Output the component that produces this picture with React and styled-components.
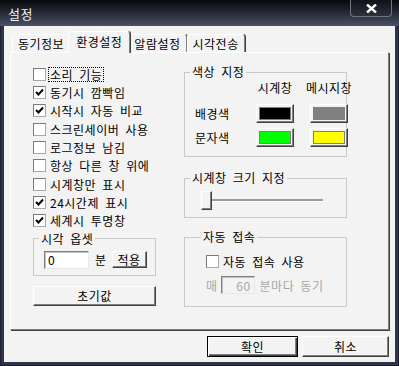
import React from "react";
import styled, { createGlobalStyle } from "styled-components";

const FONT = `"Noto Sans CJK KR", "Noto Sans", sans-serif`;

const GlobalStyle = createGlobalStyle`
  html, body { margin: 0; padding: 0; background: #2f3545; }
  body {
    font-family: ${FONT};
    font-size: 12px;
    color: #000;
    letter-spacing: 0.5px;
    word-spacing: 3px;
  }
  * { box-sizing: border-box; }
`;

const options = [
  { label: "소리 기능", checked: false, focus: true },
  { label: "동기시 깜빡임", checked: true },
  { label: "시작시 자동 비교", checked: true },
  { label: "스크린세이버 사용", checked: false },
  { label: "로그정보 남김", checked: false },
  { label: "항상 다른 창 위에", checked: false },
  { label: "시계창만 표시", checked: false },
  { label: "24시간제 표시", checked: true },
  { label: "세계시 투명창", checked: true },
];

const tabs = ["동기정보", "환경설정", "알람설정", "시각전송"];

function CheckBox({ checked }) {
    return (
        <Box>
            {checked && (
                <svg width="9" height="9" viewBox="0 0 9 9">
                    <path d="M1 4 L3.5 6.5 L8 1.5" fill="none" stroke="#000" strokeWidth="2" />
                </svg>
            )}
        </Box>
    );
}

function App() {
    return (
        <>
            <GlobalStyle />
            <Window>
                <TitleBar>
                    <Title>설정</Title>
                    <CloseBtn>
                        <svg width="11" height="9" viewBox="0 0 11 9">
                            <path d="M1 0.5 L10 8.5 M10 0.5 L1 8.5" stroke="#fff" strokeWidth="2.4" />
                        </svg>
                    </CloseBtn>
                </TitleBar>
                <Client>
                    <TabRow>
                        {tabs.map((t, i) => (
                            <Tab key={t} $active={i === 1}>{t}</Tab>
                        ))}
                    </TabRow>
                    <Panel>
                        <LeftCol>
                            <CheckList>
                                {options.map((o) => (
                                    <CheckRow key={o.label}>
                                        <CheckBox checked={o.checked} />
                                        <CheckLabel $focus={o.focus}>{o.label}</CheckLabel>
                                    </CheckRow>
                                ))}
                            </CheckList>
                            <Group $pad="5px 6px 6px 10px" $mt="2px">
                                <Legend>시각 옵셋</Legend>
                                <InlineRow>
                                    <TextInput $w="45px">0</TextInput>
                                    <Unit>분</Unit>
                                    <Button $w="35px" $h="17px">적용</Button>
                                </InlineRow>
                            </Group>
                            <Button $w="123px" $h="20px" $mt="10px">초기값</Button>
                        </LeftCol>
                        <RightCol>
                            <Group $pad="2px 10px 9px 10px">
                                <Legend>색상 지정</Legend>
                                <ColorGrid>
                                    <span />
                                    <ColHead>시계창</ColHead>
                                    <ColHead>메시지창</ColHead>
                                    <RowHead>배경색</RowHead>
                                    <Swatch><Fill $color="#000000" /></Swatch>
                                    <Swatch><Fill $color="#808080" /></Swatch>
                                    <RowHead>문자색</RowHead>
                                    <Swatch><Fill $color="#00ff00" /></Swatch>
                                    <Swatch><Fill $color="#ffff00" /></Swatch>
                                </ColorGrid>
                            </Group>
                            <Group $pad="6px 10px 7px 10px" $mt="14px">
                                <Legend>시계창 크기 지정</Legend>
                                <Slider>
                                    <Thumb />
                                </Slider>
                            </Group>
                            <Group $pad="8px 10px 12px 21px" $mt="12px">
                                <Legend>자동 접속</Legend>
                                <CheckRow>
                                    <CheckBox checked={false} />
                                    <CheckLabel>자동 접속 사용</CheckLabel>
                                </CheckRow>
                                <InlineRow $mt="6px">
                                    <Dim>매</Dim>
                                    <TextInput $w="34px" $disabled>60</TextInput>
                                    <Dim>분마다 동기</Dim>
                                </InlineRow>
                            </Group>
                        </RightCol>
                    </Panel>
                    <Footer>
                        <Button $w="91px" $h="21px" $default>확인</Button>
                        <Button $w="87px" $h="21px">취소</Button>
                    </Footer>
                </Client>
            </Window>
        </>
    );
}

const Window = styled.div`
    width: 399px;
    height: 366px;
    display: flex;
    flex-direction: column;
    background: #2f3545;
    box-shadow: inset 0 0 0 1px #1c2030;
`;
const TitleBar = styled.div`
    height: 26px;
    flex: none;
    display: flex;
    justify-content: space-between;
    align-items: flex-start;
    padding: 0 7px 0 8px;
    background: linear-gradient(#07080c 0%, #1d2029 35%, #4a5163 100%);
`;
const Title = styled.div`
    color: #f2f2f2;
    font-size: 13px;
    line-height: 27px;
`;
const CloseBtn = styled.div`
    width: 42px;
    height: 17px;
    display: flex;
    align-items: center;
    justify-content: center;
    border: 1px solid #6e7484;
    border-top: none;
    border-radius: 0 0 4px 4px;
    background: linear-gradient(#101218, #2d313d);
`;
const Client = styled.div`
    flex: 1;
    margin: 0 4px 4px;
    padding: 5px 6px 0;
    background: #f3f3f3;
    display: flex;
    flex-direction: column;
`;
const TabRow = styled.div`
    height: 21px;
    display: flex;
    align-items: flex-end;
    padding-left: 2px;
`;
const Tab = styled.div`
    position: relative;
    z-index: ${(p) => (p.$active ? 3 : 0)};
    height: ${(p) => (p.$active ? 22 : 18)}px;
    margin: 0 ${(p) => (p.$active ? -2 : 0)}px ${(p) => (p.$active ? -1 : 0)}px;
    padding: 0 ${(p) => (p.$active ? 7 : 5)}px ${(p) => (p.$active ? 2 : 0)}px;
    display: flex;
    align-items: center;
    background: #f3f3f3;
    border: 1px solid;
    border-bottom: none;
    border-color: #ffffff #808080 transparent #ffffff;
    border-radius: 3px 3px 0 0;
    box-shadow: 1px 0 0 #404040;
    font-size: 12px;
    white-space: nowrap;
`;
const Panel = styled.div`
    position: relative;
    z-index: 1;
    height: 278px;
    flex: none;
    display: grid;
    grid-template-columns: 123px 163px;
    column-gap: 28px;
    align-items: start;
    padding: 12px 0 0 22px;
    background: #f3f3f3;
    border: 1px solid;
    border-color: #ffffff #808080 #808080 #ffffff;
    box-shadow: 1px 1px 0 #404040;
`;
const LeftCol = styled.div`
    display: flex;
    flex-direction: column;
`;
const RightCol = styled.div`
    display: flex;
    flex-direction: column;
`;
const CheckList = styled.div`
    display: flex;
    flex-direction: column;
`;
const CheckRow = styled.div`
    height: 18.33px;
    display: flex;
    align-items: center;
    gap: 4px;
`;
const Box = styled.div`
    width: 13px;
    height: 13px;
    flex: none;
    display: flex;
    align-items: center;
    justify-content: center;
    background: #fff;
    border: 1px solid;
    border-color: #7a7a7a #a8a8a8 #a8a8a8 #7a7a7a;
`;
const CheckLabel = styled.span`
    font-size: 12px;
    line-height: 13px;
    padding: 0 1px;
    margin-left: -1px;
    white-space: nowrap;
    outline: ${(p) => (p.$focus ? "1px dotted #000" : "none")};
`;
const Group = styled.fieldset`
    margin: ${(p) => p.$mt || "0"} 0 0;
    padding: ${(p) => p.$pad};
    border: 1px solid #c9c9c9;
    min-width: 0;
`;
const Legend = styled.legend`
    padding: 0 2px;
    margin-left: -5px;
    font-size: 12px;
    line-height: 14px;
    white-space: nowrap;
`;
const InlineRow = styled.div`
    display: flex;
    align-items: center;
    height: 18px;
    margin-top: ${(p) => p.$mt || "0"};
`;
const TextInput = styled.div`
    width: ${(p) => p.$w};
    height: 18px;
    padding: 0 3px;
    display: flex;
    align-items: center;
    justify-content: ${(p) => (p.$disabled ? "flex-end" : "flex-start")};
    background: ${(p) => (p.$disabled ? "#f3f3f3" : "#ffffff")};
    color: ${(p) => (p.$disabled ? "#a6a6a6" : "#000")};
    border: 1px solid;
    border-color: #808080 #e8e8e8 #e8e8e8 #808080;
    box-shadow: inset 1px 1px 0 #c0c0c0;
    font-size: 12px;
    margin: ${(p) => (p.$disabled ? "0 5px 0 3px" : "0")};
`;
const Unit = styled.span`
    margin: 0 5px 0 6px;
`;
const Dim = styled.span`
    color: #a6a6a6;
    white-space: nowrap;
`;
const Button = styled.div`
    width: ${(p) => p.$w};
    height: ${(p) => p.$h};
    margin-top: ${(p) => p.$mt || "0"};
    display: flex;
    align-items: center;
    justify-content: center;
    background: #f3f3f3;
    font-size: 12px;
    border: 1px solid;
    border-color: ${(p) => (p.$default ? "#000" : "#ffffff #404040 #404040 #ffffff")};
    box-shadow: ${(p) =>
        p.$default
            ? "inset 1px 1px 0 #fff, inset -1px -1px 0 #404040, inset -2px -2px 0 #808080"
            : "inset -1px -1px 0 #808080"};
`;
const ColorGrid = styled.div`
    display: grid;
    grid-template-columns: 45px 38px 38px;
    grid-template-rows: 18px 19px 19px;
    column-gap: 16px;
    row-gap: 5px;
`;
const ColHead = styled.span`
    justify-self: center;
    align-self: start;
    line-height: 14px;
    white-space: nowrap;
`;
const RowHead = styled.span`
    align-self: center;
    white-space: nowrap;
`;
const Swatch = styled.div`
    display: flex;
    padding: 2px;
    background: #f3f3f3;
    border: 1px solid;
    border-color: #ffffff #404040 #404040 #ffffff;
    box-shadow: inset -1px -1px 0 #808080;
`;
const Fill = styled.div`
    flex: 1;
    background: ${(p) => p.$color};
    border: 1px solid #7f7f7f;
`;
const Slider = styled.div`
    width: 122px;
    height: 19px;
    margin-left: 6px;
    display: flex;
    background: linear-gradient(
        to bottom,
        transparent 8px,
        #9a9a9a 8px,
        #9a9a9a 10px,
        #ffffff 10px,
        #ffffff 11px,
        transparent 11px
    );
`;
const Thumb = styled.div`
    width: 11px;
    height: 19px;
    background: #f3f3f3;
    border: 1px solid;
    border-color: #ffffff #404040 #404040 #ffffff;
    box-shadow: inset -1px -1px 0 #808080;
`;
const Footer = styled.div`
    display: flex;
    justify-content: flex-end;
    gap: 4px;
    margin-top: 6px;
`;

export default App;
